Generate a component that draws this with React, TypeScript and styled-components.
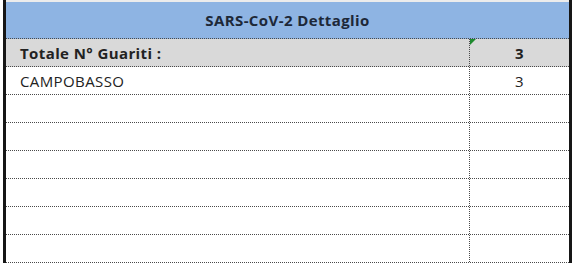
import React from 'react';
import styled, { createGlobalStyle } from 'styled-components';

const GlobalStyle = createGlobalStyle`
  html, body {
    margin: 0;
    padding: 0;
    background: #ffffff;
  }
  body {
    font-family: 'Open Sans', 'Liberation Sans', Arial, sans-serif;
  }
`;

const Page = styled.div`
  width: 576px;
  height: 266px;
  overflow: hidden;
  padding: 0 0 0 3px;
  box-sizing: border-box;
  background: #ffffff;
`;

const Sheet = styled.div`
  width: 569px;
  padding-top: 2px;
  border-left: 3px solid #161616;
  border-right: 3px solid #161616;
  box-sizing: border-box;
  display: flex;
  flex-direction: column;
  background: #ececec;
`;

const Header = styled.div`
  height: 36px;
  display: flex;
  align-items: center;
  justify-content: center;
  background: #8eb4e3;
  border-bottom: 1px dotted #4a4a4a;
  color: #1d2838;
  font-size: 15px;
  letter-spacing: 0.4px;
  font-weight: 700;
`;

const Row = styled.div<{ $total?: boolean }>`
  display: grid;
  grid-template-columns: 464px 1fr;
  height: 28px;
  box-sizing: border-box;
  border-bottom: 1px dotted #4a4a4a;
  background: ${(p) => (p.$total ? '#d9d9d9' : '#ffffff')};
  color: #222222;
  font-size: 15px;
  letter-spacing: 0.4px;
  font-weight: ${(p) => (p.$total ? 700 : 400)};
`;

const NameCell = styled.div`
  display: flex;
  align-items: center;
  padding-left: 14px;
  border-right: 1px dotted #4a4a4a;
  box-sizing: border-box;
`;

const CountCell = styled.div<{ $flag?: boolean }>`
  position: relative;
  display: flex;
  align-items: center;
  justify-content: center;

  &::before {
    content: '';
    display: ${(p) => (p.$flag ? 'block' : 'none')};
    position: absolute;
    top: 0;
    left: 0;
    width: 0;
    height: 0;
    border-top: 6px solid #1f8a2e;
    border-right: 6px solid transparent;
  }
`;

const rows: Array<{ name: string; count: string }> = [
  { name: 'CAMPOBASSO', count: '3' },
  { name: '', count: '' },
  { name: '', count: '' },
  { name: '', count: '' },
  { name: '', count: '' },
  { name: '', count: '' },
  { name: '', count: '' },
];

const App = () => {
  return (
    <Page>
      <GlobalStyle />
      <Sheet>
        <Header>SARS-CoV-2 Dettaglio</Header>
        <Row $total>
          <NameCell>Totale N° Guariti :</NameCell>
          <CountCell $flag>3</CountCell>
        </Row>
        {rows.map((r, i) => (
          <Row key={i}>
            <NameCell>{r.name}</NameCell>
            <CountCell>{r.count}</CountCell>
          </Row>
        ))}
      </Sheet>
    </Page>
  );
};

export default App;
